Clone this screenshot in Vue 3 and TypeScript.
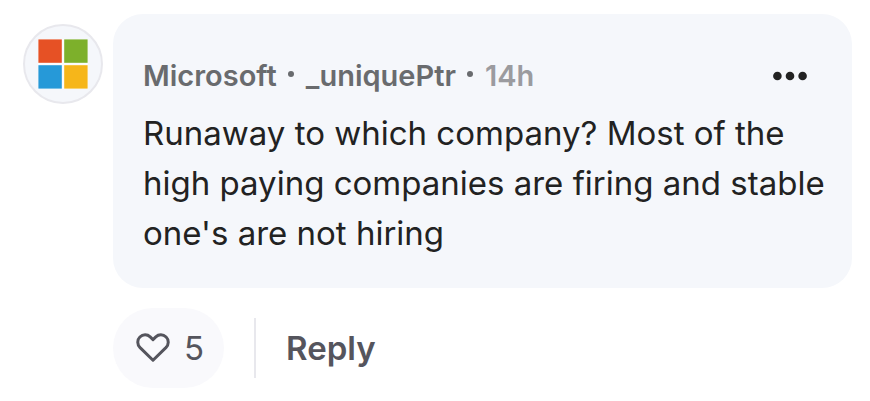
<script setup lang="ts">
import { computed, ref } from 'vue'

interface Comment {
  company: string
  author: string
  age: string
  body: string
  likes: number
}

const comment: Comment = {
  company: 'Microsoft',
  author: '_uniquePtr',
  age: '14h',
  body: "Runaway to which company? Most of the high paying companies are firing and stable one's are not hiring",
  likes: 5,
}

const liked = ref(false)
const likeCount = computed(() => comment.likes + (liked.value ? 1 : 0))
</script>

<template>
  <article class="comment">
    <div class="avatar">
      <svg class="logo" viewBox="0 0 50 50" role="img" aria-label="Microsoft">
        <rect width="50" height="50" fill="#fff" fill-opacity="0.6" />
        <rect x="0.4" y="0.4" width="23.4" height="23.4" fill="#e65125" />
        <rect x="26.2" y="0.4" width="23.4" height="23.4" fill="#7db02b" />
        <rect x="0.4" y="26.2" width="23.4" height="23.4" fill="#2699d8" />
        <rect x="26.2" y="26.2" width="23.4" height="23.4" fill="#f6b61a" />
      </svg>
    </div>
    <div class="content">
      <div class="bubble">
        <header class="meta">
          <a class="name" href="#">{{ comment.company }}</a>
          <span class="dot"></span>
          <a class="name" href="#">{{ comment.author }}</a>
          <span class="dot"></span>
          <time class="age">{{ comment.age }}</time>
          <button class="more" type="button" aria-label="More options">
            <svg viewBox="0 0 34 10" width="34" height="10" aria-hidden="true">
              <circle cx="4.4" cy="5" r="4.3" />
              <circle cx="17" cy="5" r="4.3" />
              <circle cx="29.6" cy="5" r="4.3" />
            </svg>
          </button>
        </header>
        <p class="body">{{ comment.body }}</p>
      </div>
      <footer class="actions">
        <button class="like" type="button" aria-label="Like" :aria-pressed="liked" @click="liked = !liked">
          <svg viewBox="0 0 34 30" width="34" height="30" aria-hidden="true">
            <path
              d="M17 27.2 L4.1 14.6 C1 11.4 1 6.8 3.9 4 C6.9 1.1 11.3 1.2 14.2 3.9 L17 6.6 L19.8 3.9 C22.7 1.2 27.1 1.1 30.1 4 C33 6.8 33 11.4 29.9 14.6 Z"
            />
          </svg>
          <span>{{ likeCount }}</span>
        </button>
        <span class="divider"></span>
        <button class="reply" type="button">Reply</button>
      </footer>
    </div>
  </article>
</template>

<style>
body {
  background: #fff;
}
</style>

<style scoped>
.comment {
  display: flex;
  gap: 10px;
  padding: 14px 18px 13px 23px;
  font-family: Inter, "Liberation Sans", sans-serif;
}

.avatar {
  box-sizing: border-box;
  display: flex;
  flex: none;
  align-items: center;
  justify-content: center;
  width: 80px;
  height: 80px;
  margin-top: 10px;
  border: 2px solid #e8e8ed;
  border-radius: 50%;
  background: #f5f7fb;
}

.logo {
  display: block;
  width: 50px;
  height: 50px;
}

.content {
  flex: 1;
  min-width: 0;
}

.bubble {
  padding: 30px 20px 30px 30px;
  border-radius: 30px;
  background: #f5f7fb;
}

.meta {
  display: flex;
  align-items: center;
  height: 64px;
  font-size: 29px;
  font-weight: 600;
  line-height: 40px;
}

.name {
  color: #696b6e;
  text-decoration: none;
}

.dot {
  width: 6px;
  height: 6px;
  margin: 0 12px 5px 11px;
  border-radius: 50%;
  background: #696b6e;
}

.age {
  color: #9b9b9f;
}

button {
  padding: 0;
  border: 0;
  background: none;
  font-family: inherit;
  cursor: pointer;
}

.more {
  display: flex;
  align-items: center;
  height: 40px;
  margin-left: auto;
  padding: 0 25px;
  fill: #222;
}

.body {
  margin: 0;
  color: #222;
  font-size: 33px;
  line-height: 50px;
}

.actions {
  display: flex;
  align-items: center;
  gap: 30px;
  margin-top: 20px;
  color: #55555d;
  font-size: 33px;
  line-height: 50px;
}

.like {
  display: flex;
  align-items: center;
  gap: 14px;
  height: 80px;
  padding: 0 20px 0 23px;
  border-radius: 40px;
  background: #f9f9fc;
  color: inherit;
  font-size: inherit;
  line-height: inherit;
}

.like path {
  fill: none;
  stroke: #55555d;
  stroke-width: 3;
  stroke-linejoin: round;
}

.divider {
  width: 2px;
  height: 60px;
  background: #e8e8ed;
}

.reply {
  color: inherit;
  font-size: inherit;
  font-weight: 600;
  line-height: inherit;
}
</style>
